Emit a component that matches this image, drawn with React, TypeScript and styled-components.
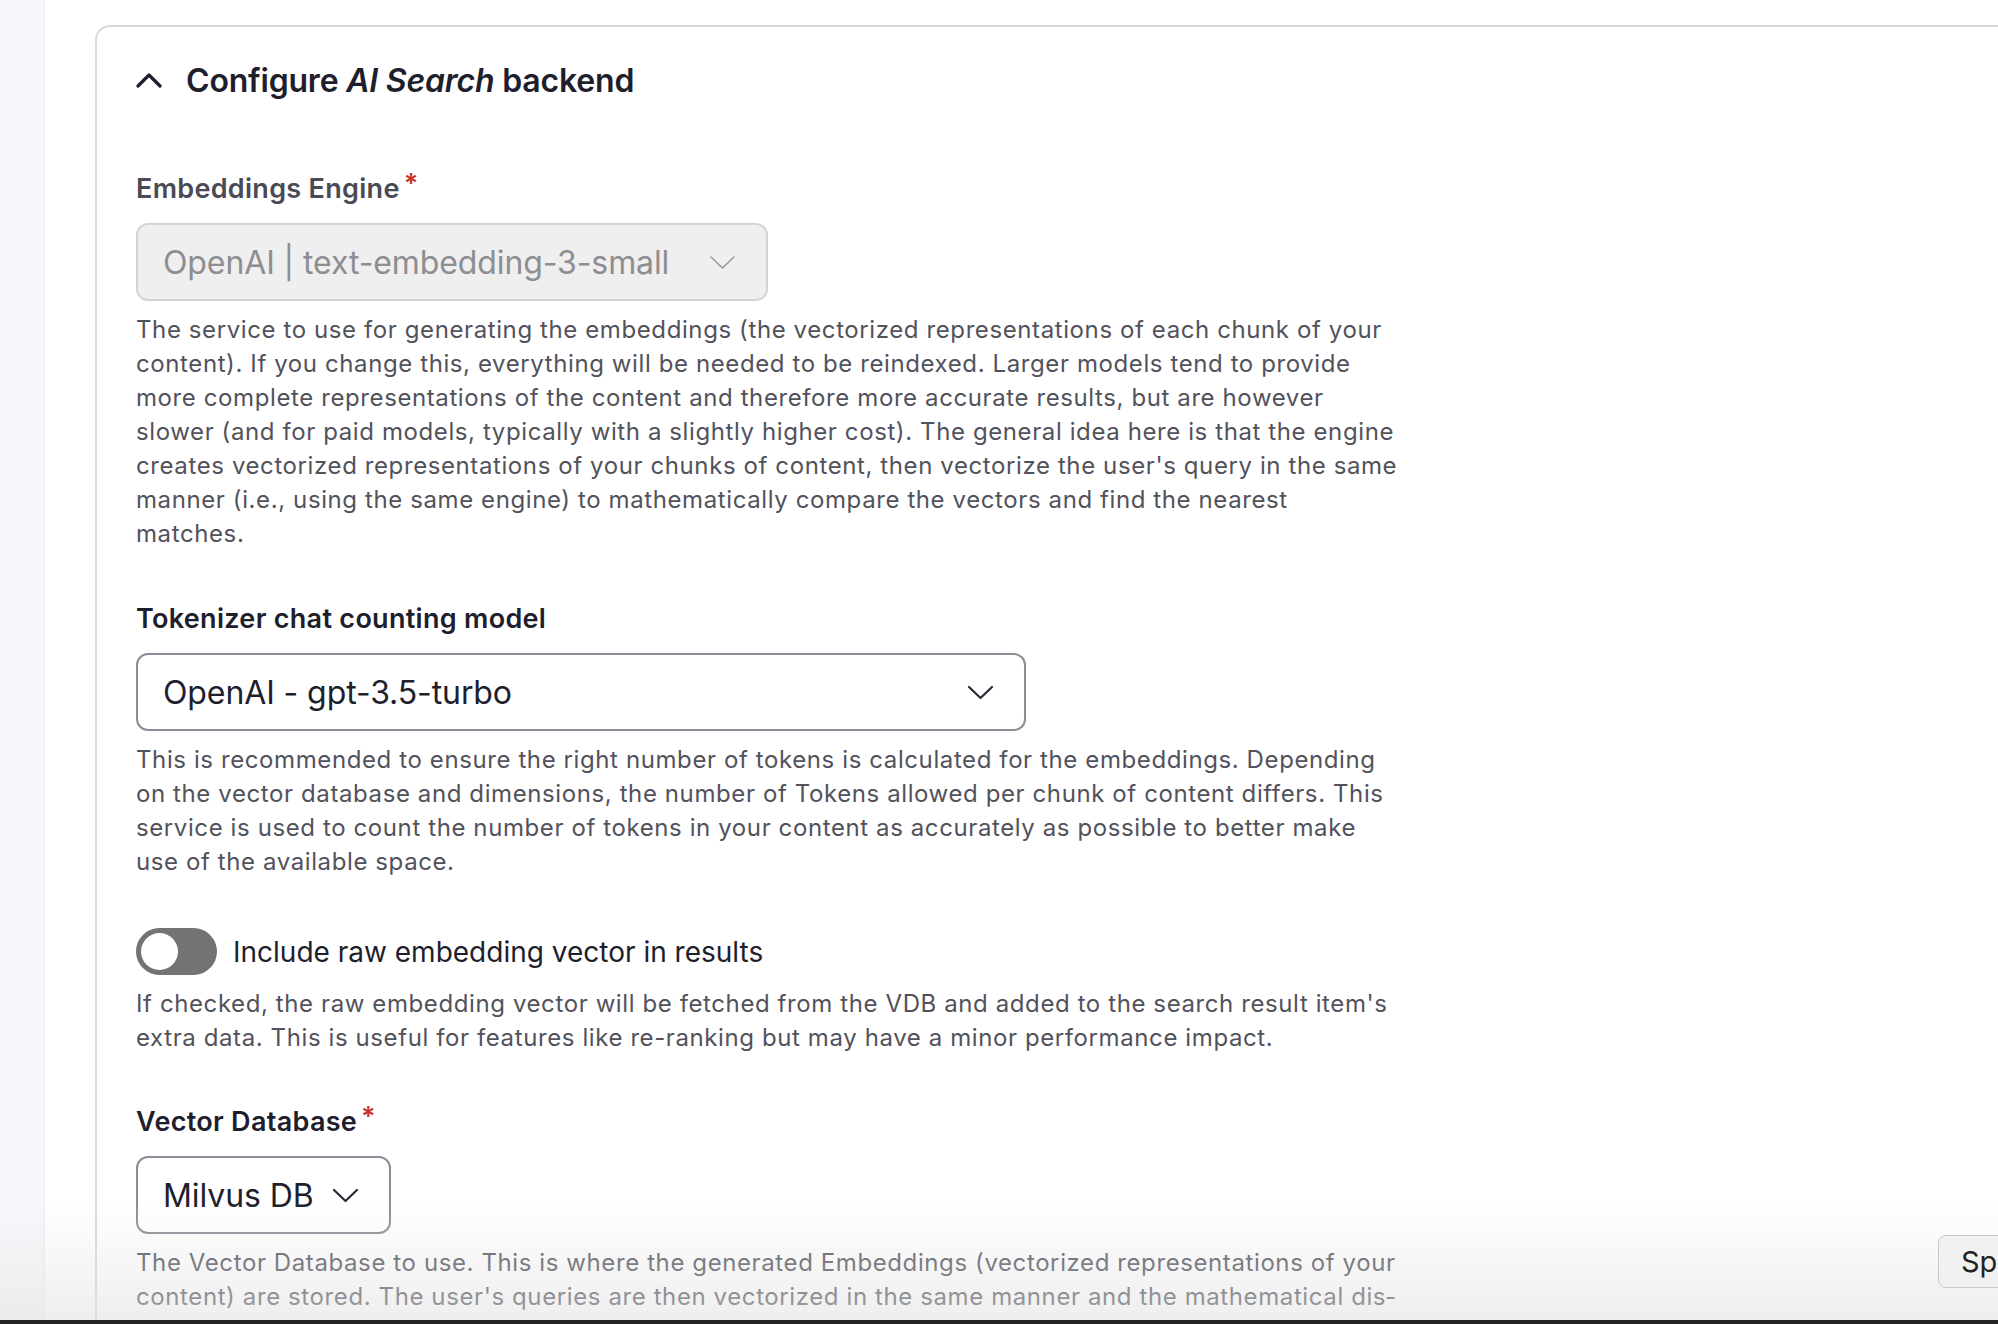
import React from "react";
import styled, { createGlobalStyle } from "styled-components";

const Global = createGlobalStyle`
  html, body { margin: 0; padding: 0; height: 100%; overflow: hidden; background: #ffffff; }
  body { font-family: Inter, "Noto Sans", "Liberation Sans", sans-serif; -webkit-font-smoothing: antialiased; }
  * { box-sizing: border-box; }
`;

const Page = styled.div`
  display: flex;
  width: 1998px;
  height: 1324px;
  overflow: hidden;
  position: relative;
`;

const SideStrip = styled.aside`
  flex: 0 0 45px;
  background: #f7f8fb;
  box-shadow: inset -2px 0 2px rgba(0, 0, 0, 0.03);
`;

const Main = styled.main`
  flex: 1;
  padding: 25px 0 0 50px;
  overflow: hidden;
`;

const Card = styled.section`
  width: 2100px;
  border: 2px solid #d9d9de;
  border-right: none;
  border-radius: 15px 0 0 0;
  padding: 17px 0 0 39px;
  min-height: 1400px;
`;

const TitleRow = styled.div`
  display: flex;
  align-items: center;
  gap: 24px;
  height: 72px;
  margin-bottom: 52px;
`;

const Title = styled.h2`
  margin: 0;
  font-size: 32px;
  font-weight: 600;
  color: #1e1e2c;
  letter-spacing: -0.2px;
  em { font-style: italic; }
`;

const Field = styled.div<{ $gap?: number }>`
  display: flex;
  flex-direction: column;
  margin-bottom: ${(p) => p.$gap ?? 52}px;
`;

const Label = styled.label<{ $muted?: boolean }>`
  font-size: 27px;
  line-height: 32px;
  font-weight: 600;
  color: ${(p) => (p.$muted ? "#4a4a54" : "#1e1e2c")};
  margin-bottom: 18px;
  letter-spacing: 0.3px;
`;

const Req = styled.span`
  color: #c8342c;
  margin-left: 4px;
  font-size: 27px;
  vertical-align: 5px;
`;

const Select = styled.div<{ $disabled?: boolean; $width: number }>`
  display: flex;
  align-items: center;
  justify-content: space-between;
  width: ${(p) => p.$width}px;
  height: 78px;
  padding: 0 30px 0 25px;
  border-radius: 12px;
  border: 2px solid ${(p) => (p.$disabled ? "#d4d4d6" : "#8c8c96")};
  background: ${(p) => (p.$disabled ? "#efefef" : "#ffffff")};
  color: ${(p) => (p.$disabled ? "#8d8d92" : "#1e1e2c")};
  font-size: 32px;
  letter-spacing: -0.1px;
`;

const Chevron = styled.svg<{ $light?: boolean }>`
  flex: 0 0 auto;
  width: 27px;
  height: 15px;
  stroke: ${(p) => (p.$light ? "#9a9aa0" : "#2a2a36")};
  stroke-width: ${(p) => (p.$light ? 1.6 : 2.2)};
  fill: none;
  stroke-linecap: round;
  stroke-linejoin: round;
`;

const Desc = styled.p`
  margin: 12px 0 0 0;
  max-width: 1264px;
  font-size: 24px;
  line-height: 34px;
  letter-spacing: 0.6px;
  color: #52525c;
`;

const ToggleRow = styled.div`
  display: flex;
  align-items: center;
  gap: 16px;
`;

const Track = styled.div`
  position: relative;
  width: 81px;
  height: 47px;
  border-radius: 24px;
  background: #737373;
`;

const Knob = styled.div`
  position: absolute;
  left: 5px;
  top: 5px;
  width: 37px;
  height: 37px;
  border-radius: 50%;
  background: #ffffff;
`;

const ToggleLabel = styled.span`
  font-size: 28px;
  color: #1e1e2c;
`;

const BottomFade = styled.div`
  position: absolute;
  left: 0;
  right: 0;
  bottom: 4px;
  height: 120px;
  background: linear-gradient(to bottom, rgba(230, 230, 230, 0), rgba(225, 225, 225, 0.55));
  pointer-events: none;
`;

const BottomBar = styled.div`
  position: absolute;
  left: 0;
  right: 0;
  bottom: 0;
  height: 4px;
  background: #232323;
`;

const FloatButton = styled.button`
  position: absolute;
  left: 1938px;
  top: 1235px;
  height: 53px;
  width: 120px;
  padding: 0 0 0 22px;
  text-align: left;
  border: 1px solid #c8c8c8;
  border-radius: 8px;
  background: #f1f1f1;
  font-family: Inter, sans-serif;
  font-size: 29px;
  color: #222;
`;

const ChevronDown = ({ light }: { light?: boolean }) => (
  <Chevron $light={light} viewBox="0 0 27 15">
    <polyline points="2,2 13.5,13 25,2" />
  </Chevron>
);

const UpIcon = styled.svg`
  width: 26px;
  height: 16px;
  fill: none;
  stroke: #1e1e2c;
  stroke-width: 3.2;
  stroke-linecap: round;
  stroke-linejoin: round;
`;

export default function App() {
  return (
    <>
      <Global />
      <Page>
        <SideStrip />
        <Main>
          <Card>
            <TitleRow>
              <UpIcon viewBox="0 0 26 16">
                <polyline points="2,14 13,3 24,14" />
              </UpIcon>
              <Title>
                Configure <em>AI Search</em> backend
              </Title>
            </TitleRow>

            <Field>
              <Label $muted>
                Embeddings Engine<Req>*</Req>
              </Label>
              <Select $disabled $width={632}>
                <span>OpenAI | text-embedding-3-small</span>
                <ChevronDown light />
              </Select>
              <Desc>
                The service to use for generating the embeddings (the vectorized representations of each chunk of your
                content). If you change this, everything will be needed to be reindexed. Larger models tend to provide
                more complete representations of the content and therefore more accurate results, but are however
                slower (and for paid models, typically with a slightly higher cost). The general idea here is that the engine
                creates vectorized representations of your chunks of content, then vectorize the user's query in the same
                manner (i.e., using the same engine) to mathematically compare the vectors and find the nearest
                matches.
              </Desc>
            </Field>

            <Field $gap={49}>
              <Label>Tokenizer chat counting model</Label>
              <Select $width={890}>
                <span>OpenAI - gpt-3.5-turbo</span>
                <ChevronDown />
              </Select>
              <Desc>
                This is recommended to ensure the right number of tokens is calculated for the embeddings. Depending
                on the vector database and dimensions, the number of Tokens allowed per chunk of content differs. This
                service is used to count the number of tokens in your content as accurately as possible to better make
                use of the available space.
              </Desc>
            </Field>

            <Field $gap={46}>
              <ToggleRow>
                <Track>
                  <Knob />
                </Track>
                <ToggleLabel>Include raw embedding vector in results</ToggleLabel>
              </ToggleRow>
              <Desc>
                If checked, the raw embedding vector will be fetched from the VDB and added to the search result item's
                extra data. This is useful for features like re-ranking but may have a minor performance impact.
              </Desc>
            </Field>

            <Field>
              <Label>
                Vector Database<Req>*</Req>
              </Label>
              <Select $width={255}>
                <span>Milvus DB</span>
                <ChevronDown />
              </Select>
              <Desc>
                The Vector Database to use. This is where the generated Embeddings (vectorized representations of your
                content) are stored. The user's queries are then vectorized in the same manner and the mathematical dis{"\u00AD"}tance
                between them is calculated.
              </Desc>
            </Field>
          </Card>
        </Main>
        <BottomFade />
        <BottomBar />
        <FloatButton>Sp</FloatButton>
      </Page>
    </>
  );
}
